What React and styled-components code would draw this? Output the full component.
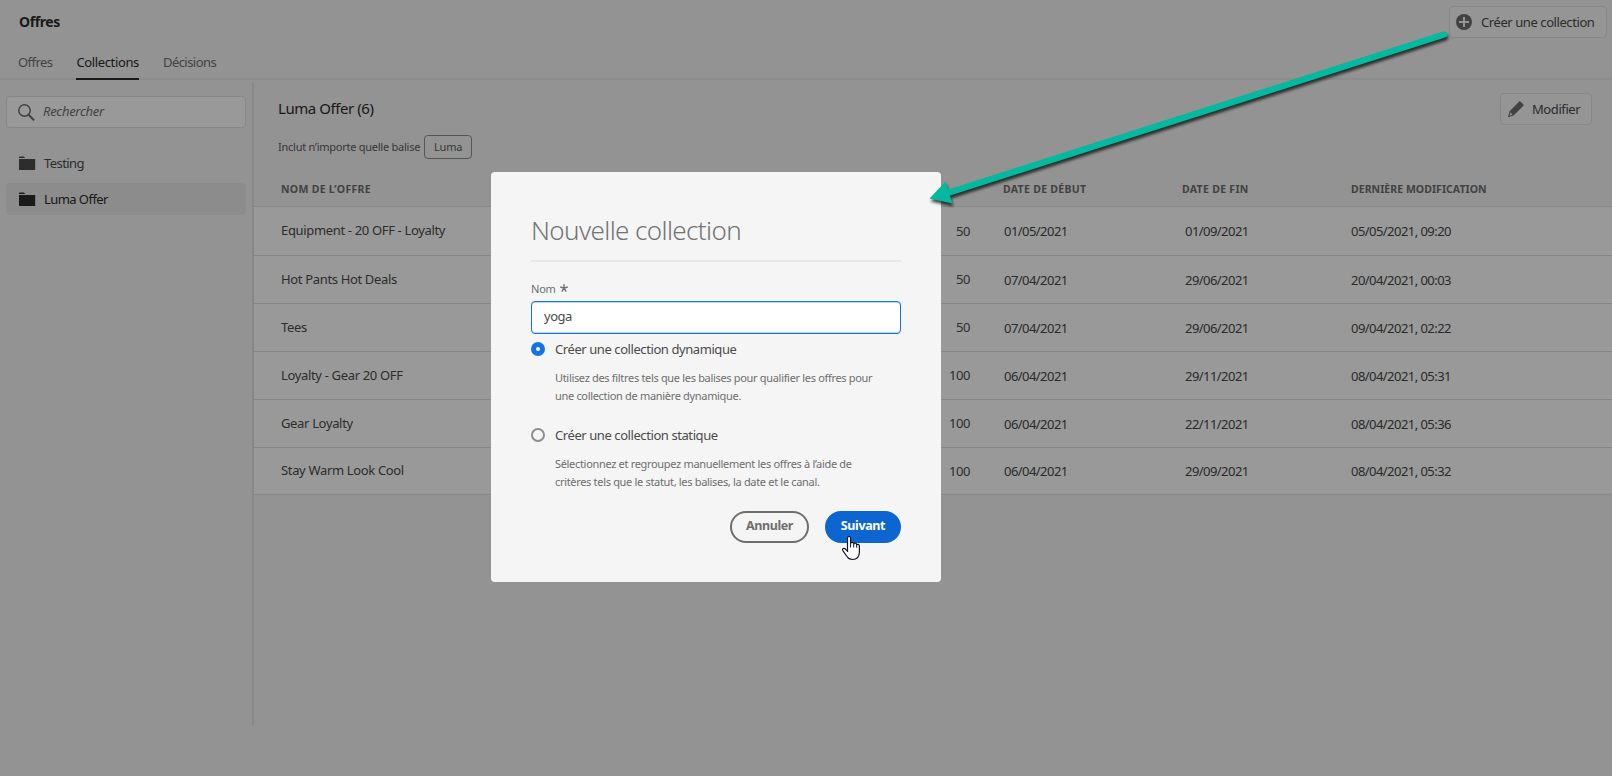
import React from 'react';
import styled, { createGlobalStyle, css } from 'styled-components';

const GlobalStyle = createGlobalStyle`
  *, *::before, *::after { box-sizing: border-box; }
  html, body { margin: 0; padding: 0; }
  body {
    overflow: hidden;
    background: #f5f5f5;
    color: #4b4b4b;
    font-family: "Noto Sans", "Open Sans", sans-serif;
    font-size: 13px;
    letter-spacing: -0.45px;
    line-height: 18px;
  }
  button, input { font: inherit; letter-spacing: inherit; color: inherit; }
`;

const Page = styled.div`
  display: flex;
  flex-direction: column;
  width: 100vw;
  height: 100vh;
`;

const TopBar = styled.header`
  display: flex;
  align-items: flex-start;
  justify-content: space-between;
  height: 46px;
  padding: 6px 5px 0 19px;
`;

const AppTitle = styled.h1`
  margin: 7px 0 0;
  color: #2c2c2c;
  font-size: 14px;
  font-weight: 700;
  letter-spacing: -0.4px;
  line-height: 18px;
`;

const ToolButton = styled.button`
  display: flex;
  align-items: center;
  gap: ${(p) => p.$gap}px;
  height: 32px;
  width: ${(p) => p.$width}px;
  padding: 0 0 1px ${(p) => p.$inset}px;
  border: 1px solid #e1e1e1;
  border-radius: 4px;
  background: #f8f8f8;
  letter-spacing: -0.42px;
  white-space: nowrap;
`;

const Tabs = styled.nav`
  display: flex;
  gap: 24px;
  height: 34px;
  padding-left: 18px;
  border-bottom: 2px solid #eaeaea;
`;

const Tab = styled.a`
  height: 34px;
  padding-top: 7px;
  color: #707070;
  letter-spacing: -0.55px;
  ${(p) => p.$active && css`
    color: #2c2c2c;
    border-bottom: 2px solid #2c2c2c;
    letter-spacing: -0.37px;
  `}
`;

const Body = styled.div`
  display: flex;
  flex: 1;
  min-height: 0;
`;

const Sidebar = styled.aside`
  width: 252px;
  padding: 16px 6px 0;
`;

const SearchField = styled.label`
  display: flex;
  align-items: center;
  gap: 8px;
  height: 32px;
  padding: 0 0 2px 11px;
  border: 1px solid #e1e1e1;
  border-radius: 4px;
  background: #fff;
  color: #707070;
  font-style: italic;
  letter-spacing: -0.3px;

  svg { margin-top: 2px; }
`;

const FolderList = styled.ul`
  display: flex;
  flex-direction: column;
  gap: 4px;
  margin: 19px 0 0;
  padding: 0;
  list-style: none;
`;

const FolderItem = styled.li`
  display: flex;
  align-items: center;
  gap: 8px;
  height: 32px;
  padding-left: 13px;
  border-radius: 4px;
  background: ${(p) => (p.$selected ? '#eaeaea' : 'transparent')};
  color: ${(p) => (p.$selected ? '#2c2c2c' : '#4b4b4b')};
  letter-spacing: -0.56px;
`;

const Content = styled.main`
  display: flex;
  flex-direction: column;
  flex: 1;
  height: 642px;
  margin-top: 3px;
  border-left: 2px solid #e3e3e3;
`;

const ContentHead = styled.div`
  display: flex;
  align-items: flex-start;
  justify-content: space-between;
  height: 52px;
  padding: 10px 20px 0 24px;
`;

const CollectionTitle = styled.h2`
  margin: 6px 0 0;
  color: #2c2c2c;
  font-size: 15px;
  font-weight: 400;
  letter-spacing: -0.44px;
  line-height: 18px;
`;

const Filter = styled.div`
  display: flex;
  align-items: center;
  gap: 4px;
  height: 24px;
  padding-left: 24px;
  color: #5c5c5c;
  font-size: 11px;
  letter-spacing: -0.25px;
`;

const Tag = styled.span`
  display: flex;
  align-items: center;
  justify-content: center;
  width: 48px;
  height: 24px;
  border: 1px solid #8e8e8e;
  border-radius: 4px;
`;

const Table = styled.div`
  margin-top: 12px;
`;

const gridColumns = css`
  display: grid;
  grid-template-columns: 500px 215px 179px 168px 1fr;
  align-items: center;
  padding-left: 27px;
`;

const TableHead = styled.div`
  ${gridColumns}
  height: 36px;
  padding-top: 1px;
  border-bottom: 1px solid #e1e1e1;
  color: #6e6e6e;
  font-size: 10.5px;
  font-weight: 700;
`;

const TableRow = styled.div`
  ${gridColumns}
  height: ${(p) => p.$height}px;
  border-bottom: 1px solid #e1e1e1;
  background: #fff;
`;

const HeadCell = styled.span`
  padding-left: ${(p) => p.$inset || 0}px;
  letter-spacing: ${(p) => (p.$wide ? 0.3 : 0.05)}px;
`;

const NameCell = styled.span`
  padding-bottom: 2px;
  letter-spacing: -0.34px;
`;

const CountCell = styled.span`
  padding: 0 26px 1px 0;
  text-align: right;
  letter-spacing: -0.45px;
`;

const DateCell = styled.span`
  padding: 0 0 0 ${(p) => p.$inset || 0}px;
  color: #474747;
  letter-spacing: -0.55px;
`;

const Backdrop = styled.div`
  position: fixed;
  inset: 0;
  padding: 172px 0 0 491px;
  background: rgba(0, 0, 0, 0.4);
`;

const Dialog = styled.section`
  width: 450px;
  height: 410px;
  padding: 41px 40px 0;
  border-radius: 4px;
  background: #f5f5f5;
  color: #6e6e6e;
`;

const DialogTitle = styled.h2`
  height: 49px;
  margin: 0;
  border-bottom: 2px solid #e8e8e8;
  color: #747474;
  font-size: 26px;
  font-weight: 300;
  letter-spacing: -0.62px;
  line-height: 34px;
`;

const FieldLabel = styled.label`
  display: flex;
  align-items: center;
  gap: 4px;
  height: 18px;
  margin-top: 18px;
  font-size: 11px;
  letter-spacing: -0.2px;

  svg { margin-bottom: 2px; }
`;

const NameInput = styled.input`
  display: block;
  width: 370px;
  height: 33px;
  margin: 3px 0 0;
  padding: 0 12px 3px;
  border: 1px solid #1473e6;
  border-radius: 4px;
  outline: none;
  background: #fff;
  color: #4b4b4b;
  box-shadow: inset 0 1px 0 #b9d5f8, inset 0 -1px 0 #b9d5f8;
  letter-spacing: -0.5px;
`;

const Option = styled.div`
  display: grid;
  grid-template-columns: 14px 1fr;
  column-gap: 10px;
  align-items: center;
  height: ${(p) => p.$height}px;
  padding-top: 6px;
  align-content: start;
`;

const Radio = styled.span`
  width: 14px;
  height: 14px;
  border: ${(p) => (p.$checked ? '5px solid #1473e6' : '2px solid #8e8e8e')};
  border-radius: 50%;
  background: ${(p) => (p.$checked ? '#fff' : '#f5f5f5')};
`;

const OptionLabel = styled.span`
  color: #4b4b4b;
  letter-spacing: -0.42px;
`;

const OptionText = styled.p`
  grid-column: 2;
  margin: 11px 0 0;
  font-size: 11px;
  letter-spacing: -0.32px;
  line-height: 18px;
  white-space: nowrap;
`;

const Actions = styled.div`
  display: flex;
  justify-content: flex-end;
  gap: 16px;
`;

const PillButton = styled.button`
  width: ${(p) => p.$width}px;
  height: 32px;
  padding: 0 0 2px;
  border: 2px solid ${(p) => (p.$primary ? '#0d66d0' : '#6e6e6e')};
  border-radius: 16px;
  background: ${(p) => (p.$primary ? '#0d66d0' : 'transparent')};
  color: ${(p) => (p.$primary ? '#fff' : '#6e6e6e')};
  font-size: 12.5px;
  font-weight: 700;
  letter-spacing: -0.38px;
`;

const Annotation = styled.svg`
  position: fixed;
  inset: 0;
  pointer-events: none;
  filter: drop-shadow(1px 3px 1.5px rgba(0, 0, 0, 0.7));
`;

const Pointer = styled.svg`
  position: fixed;
  left: 841px;
  top: 535px;
`;

const AddIcon = () => (
  <svg width="16" height="16" viewBox="0 0 16 16">
    <circle cx="8" cy="8" r="8" fill="#6e6e6e" />
    <path d="M8 3v10M3 8h10" stroke="#f8f8f8" strokeWidth="2" />
  </svg>
);

const PencilIcon = () => (
  <svg width="16" height="16" viewBox="0 0 16 16" fill="#6e6e6e">
    <path d="M11.2.6a.9.9 0 0 1 1.2 0l3 3a.9.9 0 0 1 0 1.2L5.6 14.4.8 16a.6.6 0 0 1-.7-.8L1.7 10.3zM2.5 11.6 1.4 14.7l3.1-1.1z" fillRule="evenodd" />
  </svg>
);

const SearchIcon = () => (
  <svg width="17" height="17" viewBox="0 0 17 17" fill="none" stroke="#6e6e6e" strokeWidth="1.5">
    <circle cx="6.5" cy="6.5" r="5.7" />
    <path d="m10.6 10.8 4.9 4.9" strokeWidth="2" strokeLinecap="round" />
  </svg>
);

const FolderIcon = ({ selected }) => (
  <svg width="17" height="15" viewBox="0 0 17 15" fill={selected ? '#2c2c2c' : '#4b4b4b'}>
    <path d="M0 2V1.2Q0 .5.8.5H4.6q.5 0 .8.4L6.2 2z" />
    <path d="M0 3h15.7q.5 0 .5.5v10q0 .5-.5.5H.5q-.5 0-.5-.5z" />
  </svg>
);

const RequiredIcon = () => (
  <svg width="8" height="8" viewBox="0 0 8 8" stroke="#6e6e6e" strokeWidth="1.4">
    <path d="M4 4.2V.2M4 4.2.3 3M4 4.2 7.7 3M4 4.2 1.8 7.6M4 4.2 6.2 7.6" />
  </svg>
);

const offers = [
  { name: 'Equipment - 20 OFF - Loyalty', count: 50, start: '01/05/2021', end: '01/09/2021', edited: '05/05/2021, 09:20', height: 49 },
  { name: 'Hot Pants Hot Deals', count: 50, start: '07/04/2021', end: '29/06/2021', edited: '20/04/2021, 00:03', height: 48 },
  { name: 'Tees', count: 50, start: '07/04/2021', end: '29/06/2021', edited: '09/04/2021, 02:22', height: 48 },
  { name: 'Loyalty - Gear 20 OFF', count: 100, start: '06/04/2021', end: '29/11/2021', edited: '08/04/2021, 05:31', height: 48 },
  { name: 'Gear Loyalty', count: 100, start: '06/04/2021', end: '22/11/2021', edited: '08/04/2021, 05:36', height: 48 },
  { name: 'Stay Warm Look Cool', count: 100, start: '06/04/2021', end: '29/09/2021', edited: '08/04/2021, 05:32', height: 47 },
];

export default function App() {
  return (
    <>
      <GlobalStyle />
      <Page>
        <TopBar>
          <AppTitle>Offres</AppTitle>
          <ToolButton $width={158} $inset={6} $gap={9}>
            <AddIcon />
            Créer une collection
          </ToolButton>
        </TopBar>
        <Tabs>
          <Tab>Offres</Tab>
          <Tab $active>Collections</Tab>
          <Tab>Décisions</Tab>
        </Tabs>
        <Body>
          <Sidebar>
            <SearchField>
              <SearchIcon />
              Rechercher
            </SearchField>
            <FolderList>
              <FolderItem>
                <FolderIcon />
                Testing
              </FolderItem>
              <FolderItem $selected>
                <FolderIcon selected />
                Luma Offer
              </FolderItem>
            </FolderList>
          </Sidebar>
          <Content>
            <ContentHead>
              <CollectionTitle>Luma Offer (6)</CollectionTitle>
              <ToolButton $width={92} $inset={7} $gap={8}>
                <PencilIcon />
                Modifier
              </ToolButton>
            </ContentHead>
            <Filter>
              Inclut n’importe quelle balise
              <Tag>Luma</Tag>
            </Filter>
            <Table>
              <TableHead>
                <HeadCell $wide>NOM DE L’OFFRE</HeadCell>
                <HeadCell />
                <HeadCell $wide $inset={7}>DATE DE DÉBUT</HeadCell>
                <HeadCell $wide $inset={7}>DATE DE FIN</HeadCell>
                <HeadCell $inset={8}>DERNIÈRE MODIFICATION</HeadCell>
              </TableHead>
              {offers.map((o) => (
                <TableRow key={o.name} $height={o.height}>
                  <NameCell>{o.name}</NameCell>
                  <CountCell>{o.count}</CountCell>
                  <DateCell $inset={8}>{o.start}</DateCell>
                  <DateCell $inset={10}>{o.end}</DateCell>
                  <DateCell $inset={8}>{o.edited}</DateCell>
                </TableRow>
              ))}
            </Table>
          </Content>
        </Body>
      </Page>

      <Backdrop>
        <Dialog>
          <DialogTitle>Nouvelle collection</DialogTitle>
          <FieldLabel htmlFor="collection-name">
            Nom
            <RequiredIcon />
          </FieldLabel>
          <NameInput id="collection-name" defaultValue="yoga" />
          <Option $height={86}>
            <Radio $checked />
            <OptionLabel>Créer une collection dynamique</OptionLabel>
            <OptionText>
              Utilisez des filtres tels que les balises pour qualifier les offres pour
              <br />
              une collection de manière dynamique.
            </OptionText>
          </Option>
          <Option $height={91}>
            <Radio />
            <OptionLabel>Créer une collection statique</OptionLabel>
            <OptionText>
              Sélectionnez et regroupez manuellement les offres à l’aide de
              <br />
              critères tels que le statut, les balises, la date et le canal.
            </OptionText>
          </Option>
          <Actions>
            <PillButton $width={79}>Annuler</PillButton>
            <PillButton $primary $width={76}>Suivant</PillButton>
          </Actions>
        </Dialog>
      </Backdrop>

      <Annotation width="1612" height="776" viewBox="0 0 1612 776" fill="#04b99d">
        <path d="M1444 34.5 946 193.5" stroke="#04b99d" strokeWidth="6.5" strokeLinecap="round" />
        <path d="M929.5 198.5 945.5 181.5 952.5 203.5z" />
      </Annotation>
      <Pointer width="20" height="26" viewBox="0 0 20 26">
        <path
          d="M6.5 17V3.2Q6.5 1.5 8 1.5T9.6 3.2V8.5Q9.8 7.2 11.2 7.4 12.6 7.6 12.7 9 13 7.9 14.3 8.2 15.6 8.5 15.7 9.8 16.2 9 17.3 9.4 18.4 9.9 18.4 11.2V17Q18.4 24.5 11.5 24.5 7.8 24.5 6 21.5L2 15.8Q1 14.2 2.3 13.5 3.5 13 4.7 14.3L6.5 16.2"
          fill="#fff"
          stroke="#16162a"
          strokeWidth="1.2"
          strokeLinejoin="round"
        />
        <path d="M9.6 8.5v4M12.7 9v3.5M15.7 9.8v3" fill="none" stroke="#16162a" />
      </Pointer>
    </>
  );
}
